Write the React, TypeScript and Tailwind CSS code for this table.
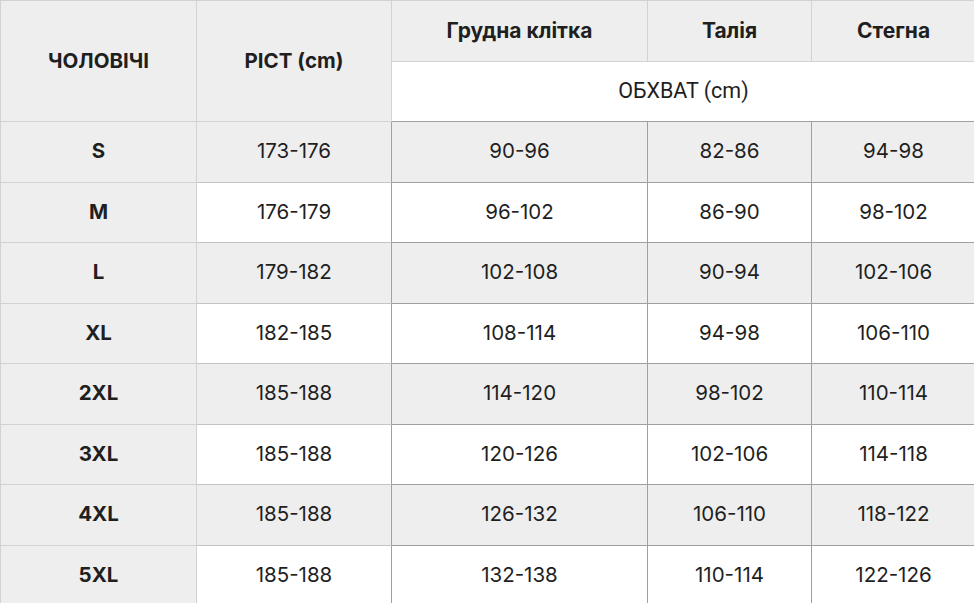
import React from "react"

const rows = [
	["S", "173-176", "90-96", "82-86", "94-98"],
	["M", "176-179", "96-102", "86-90", "98-102"],
	["L", "179-182", "102-108", "90-94", "102-106"],
	["XL", "182-185", "108-114", "94-98", "106-110"],
	["2XL", "185-188", "114-120", "98-102", "110-114"],
	["3XL", "185-188", "120-126", "102-106", "114-118"],
	["4XL", "185-188", "126-132", "106-110", "118-122"],
	["5XL", "185-188", "132-138", "110-114", "122-126"],
]

export default function App() {
	return (
		<div className="w-[974px] h-[603px] overflow-hidden bg-white text-[#1f1f1f] font-['Inter','Noto_Sans',sans-serif]">
			<table className="border-separate border-spacing-0 table-fixed w-[975px] text-center">
				<colgroup>
					<col className="w-[197px]" />
					<col className="w-[195px]" />
					<col className="w-[256px]" />
					<col className="w-[164px]" />
					<col className="w-[163px]" />
				</colgroup>
				<thead>
					<tr className="h-[62px]">
						<th
							rowSpan={2}
							className="bg-[#eeeeee] border-t border-l border-r border-b border-[#d2d2d2] text-[20.5px] font-bold"
						>
							ЧОЛОВІЧІ
						</th>
						<th
							rowSpan={2}
							className="bg-[#eeeeee] border-t border-r border-b border-[#d2d2d2] text-[20.5px] font-bold"
						>
							PICT (cm)
						</th>
						<th className="bg-[#eeeeee] border-t border-r border-b border-[#d2d2d2] text-[21px] font-bold">
							Грудна клітка
						</th>
						<th className="bg-[#eeeeee] border-t border-r border-b border-[#d2d2d2] text-[21px] font-bold">
							Талія
						</th>
						<th className="bg-[#eeeeee] border-t border-b border-[#d2d2d2] text-[21px] font-bold">
							Стегна
						</th>
					</tr>
					<tr className="h-[60px]">
						<th
							colSpan={3}
							className="bg-white border-b border-[#a0a0a0] text-[21.5px] font-normal font-['Roboto',sans-serif]"
						>
							ОБХВАТ (cm)
						</th>
					</tr>
				</thead>
				<tbody>
					{rows.map((r, i) => {
						const gray = i % 2 === 0
						const bg = gray ? "bg-[#eeeeee]" : "bg-white"
						return (
							<tr key={r[0]} className="h-[60.5px] text-[20.5px]">
								<td className="bg-[#eeeeee] border-l border-r border-b border-[#d2d2d2] font-bold">
									{r[0]}
								</td>
								<td className={`${bg} border-r border-r-[#a0a0a0] border-b border-b-[#c4c4c4]`}>
									{r[1]}
								</td>
								<td className={`${bg} border-r border-b border-[#a0a0a0]`}>{r[2]}</td>
								<td className={`${bg} border-r border-b border-[#a0a0a0]`}>{r[3]}</td>
								<td className={`${bg} border-b border-[#a0a0a0]`}>{r[4]}</td>
							</tr>
						)
					})}
				</tbody>
			</table>
		</div>
	)
}
